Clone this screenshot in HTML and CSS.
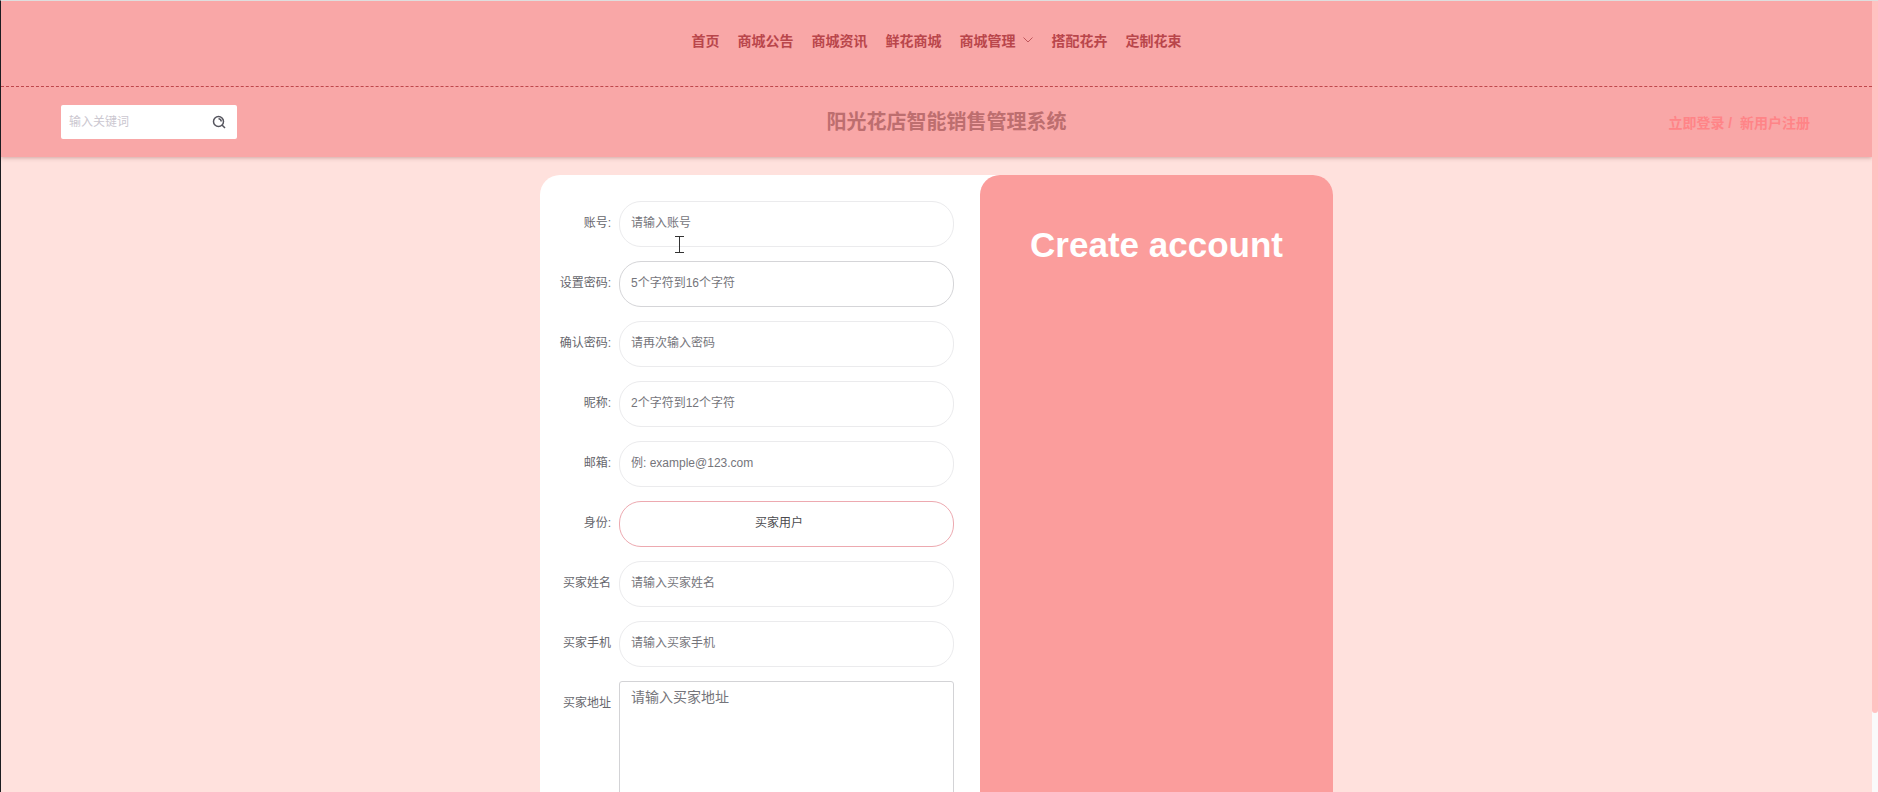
FILE: index.html
```html
<!DOCTYPE html>
<html lang="zh-CN">
<head>
<meta charset="utf-8">
<title>阳光花店智能销售管理系统</title>
<link rel="stylesheet" href="styles.css">
</head>
<body>
<div class="shell">
  <div class="page">
    <header class="header">
      <nav class="nav">
        <a href="#">首页</a>
        <a href="#">商城公告</a>
        <a href="#">商城资讯</a>
        <a href="#">鲜花商城</a>
        <a href="#" class="has-menu">商城管理<svg class="chevron" viewBox="0 0 12 12" aria-hidden="true"><path d="M1.500 3.500 6 8l4.500-4.500"/></svg></a>
        <a href="#">搭配花卉</a>
        <a href="#">定制花束</a>
      </nav>
      <div class="bar">
        <form class="search">
          <input type="text" placeholder="输入关键词" aria-label="输入关键词">
          <button type="button" aria-label="搜索">
            <svg viewBox="0 0 14 14" aria-hidden="true"><circle cx="6.500" cy="6.500" r="5"/><path d="M6.500 3.800a2.700 2.700 0 0 1 2.700 2.700M10 10l3 3"/></svg>
          </button>
        </form>
        <h1 class="title">阳光花店智能销售管理系统</h1>
        <div class="account"><a href="#">立即登录</a> /&nbsp; <a href="#">新用户注册</a></div>
      </div>
    </header>
    <main class="main">
      <div class="card">
        <form class="form">
          <label for="user">账号:</label>
          <input id="user" type="text" placeholder="请输入账号">
          <label for="pass">设置密码:</label>
          <input id="pass" class="strong" type="password" placeholder="5个字符到16个字符">
          <label for="pass2">确认密码:</label>
          <input id="pass2" type="password" placeholder="请再次输入密码">
          <label for="nick">昵称:</label>
          <input id="nick" type="text" placeholder="2个字符到12个字符">
          <label for="mail">邮箱:</label>
          <input id="mail" type="email" placeholder="例: example@123.com">
          <label for="role">身份:</label>
          <select id="role"><option>买家用户</option></select>
          <label for="name">买家姓名</label>
          <input id="name" type="text" placeholder="请输入买家姓名">
          <label for="phone">买家手机</label>
          <input id="phone" type="tel" placeholder="请输入买家手机">
          <label for="address">买家地址</label>
          <textarea id="address" placeholder="请输入买家地址"></textarea>
        </form>
        <aside class="panel"><h2>Create account</h2></aside>
        <svg class="cursor" viewBox="0 0 9 17" aria-hidden="true"><path d="M0 .5h9M0 16.500h9M4.500 .5v16"/></svg>
      </div>
    </main>
  </div>
  <div class="scrollbar"><div class="thumb"></div></div>
</div>
</body>
</html>
```
FILE: styles.css
```css
* { box-sizing: border-box; }

body {
  margin: 0;
  font-family: "Liberation Sans", "Noto Sans CJK SC", sans-serif;
  font-size: 12px;
  color: #66666c;
}

a { color: inherit; text-decoration: none; }

input, select, textarea, button { font: inherit; color: inherit; }

.shell {
  display: grid;
  grid-template-columns: 1fr 6px;
  height: 100vh;
  border-top: 1px solid #dedede;
  border-left: 1px solid #1c1c20;
}

.page {
  display: flex;
  flex-direction: column;
  min-height: 0;
  overflow: hidden;
  background: #ffe1dd;
}

.header {
  position: relative;
  flex: none;
  background: #f9a7a7;
  box-shadow: 0 1px 4px rgba(120, 60, 60, .35);
}

.nav {
  display: flex;
  justify-content: center;
  align-items: center;
  gap: 18px;
  height: 86px;
  padding-bottom: 8px;
  border-bottom: 1px dashed #bf474c;
  font-size: 14px;
  font-weight: 700;
  color: #b9464b;
}

.nav .has-menu { display: flex; align-items: center; gap: 6px; }

.chevron { width: 12px; height: 12px; fill: none; stroke: #c0575b; }

.bar {
  display: grid;
  grid-template-columns: 1fr auto 1fr;
  align-items: center;
  height: 70px;
  padding: 0 62px 0 60px;
}

.search {
  display: flex;
  align-items: center;
  width: 176px;
  height: 34px;
  padding: 0 11px 0 8px;
  background: #fff;
  border-radius: 2px;
}

.search input {
  flex: 1;
  min-width: 0;
  padding: 0;
  border: 0;
  outline: 0;
  background: none;
}

.search input::placeholder { color: #cbc7d0; }

.search button {
  display: flex;
  padding: 0;
  border: 0;
  background: none;
}

.search svg {
  width: 14px;
  height: 14px;
  fill: none;
  stroke: #55555e;
  stroke-width: 1.5;
}

.title {
  margin: 0;
  padding-left: 22px;
  font-size: 20px;
  line-height: 28px;
  font-weight: 700;
  color: #bd6e6f;
}

.account {
  text-align: right;
  font-size: 14px;
  font-weight: 700;
  color: #ff8487;
}

.main {
  flex: 1;
  min-height: 0;
  padding: 18px 20px 0;
}

.card {
  position: relative;
  display: flex;
  max-width: 793px;
  margin: 0 auto;
  background: #fff;
  border-radius: 20px;
}

.form {
  flex: 1;
  display: grid;
  grid-template-columns: 71px 1fr;
  column-gap: 8px;
  row-gap: 14px;
  padding: 26px 26px 60px 0;
}

.form label {
  height: 46px;
  line-height: 44px;
  text-align: right;
}

.form input, .form select {
  width: 100%;
  height: 46px;
  padding: 0 12px 2px 11px;
  border: 1px solid #ebebed;
  border-radius: 22px;
  background: #fff;
  outline: 0;
}

.form input.strong { border-color: #d5d5d8; }

.form select {
  appearance: none;
  padding-right: 26px;
  border-color: #eda9b0;
  text-align-last: center;
  color: #4a4a4e;
}

.form textarea {
  width: 100%;
  height: 180px;
  padding: 4px 11px;
  border: 1px solid #d3d3d6;
  border-radius: 3px;
  outline: 0;
  resize: none;
  font-size: 14px;
}

.form ::placeholder { color: #75757b; opacity: 1; }

.panel {
  flex: 0 0 353px;
  background: #fb9d9c;
  border-radius: 20px;
  text-align: center;
}

.panel h2 {
  margin: 50px 0 0;
  font-size: 35px;
  line-height: 40px;
  color: #fff;
}

.cursor {
  position: absolute;
  left: 135px;
  top: 61px;
  width: 9px;
  height: 17px;
  fill: none;
  stroke: #333;
  pointer-events: none;
}

.scrollbar { background: #fafafa; }

.thumb {
  height: 90%;
  background: #ffc2c1;
  border-radius: 0 0 3px 3px;
}
```
